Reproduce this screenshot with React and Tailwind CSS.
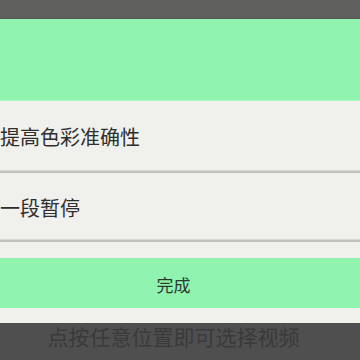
import React from 'react'

const font = { fontFamily: '"Noto Sans CJK SC", "Noto Sans", sans-serif' }

const Divider = () => (
  <div className="flex flex-col">
    <div className="h-[1px] bg-[#d8d8d4]"></div>
    <div className="h-[2px] bg-[#c2c2be]"></div>
  </div>
)

const App = () => {
  return (
    <div className="w-[360px] h-[360px] overflow-hidden flex flex-col bg-[#f0f0ec]" style={font}>
      <div className="h-[19px] bg-[#5f5f5d] border-b border-[#565654]"></div>
      <div className="h-[82px] bg-[#90f3b0] border-b border-[#aef6c6]"></div>
      <div className="h-[69px] flex items-center pt-[2px]">
        <span className="text-[20px] leading-[24px] text-[#2e2e2e]">提高色彩准确性</span>
      </div>
      <Divider />
      <div className="h-[66px] flex items-center pt-[3px]">
        <span className="text-[20px] leading-[24px] text-[#2e2e2e]">一段暂停</span>
      </div>
      <Divider />
      <div className="h-[16px]"></div>
      <button className="h-[50px] bg-[#90f3b0] flex items-center justify-center pr-[13px] pt-[4px]">
        <span className="text-[17px] leading-[20px] text-[#2a3a2f]">完成</span>
      </button>
      <div className="h-[15px]"></div>
      <div className="flex-1 bg-[#4f4f4f] flex justify-center pr-[13px] pt-[2px]">
        <span className="text-[21px] leading-[22px] text-[#3a3a3a]">点按任意位置即可选择视频</span>
      </div>
    </div>
  )
}

export default App
